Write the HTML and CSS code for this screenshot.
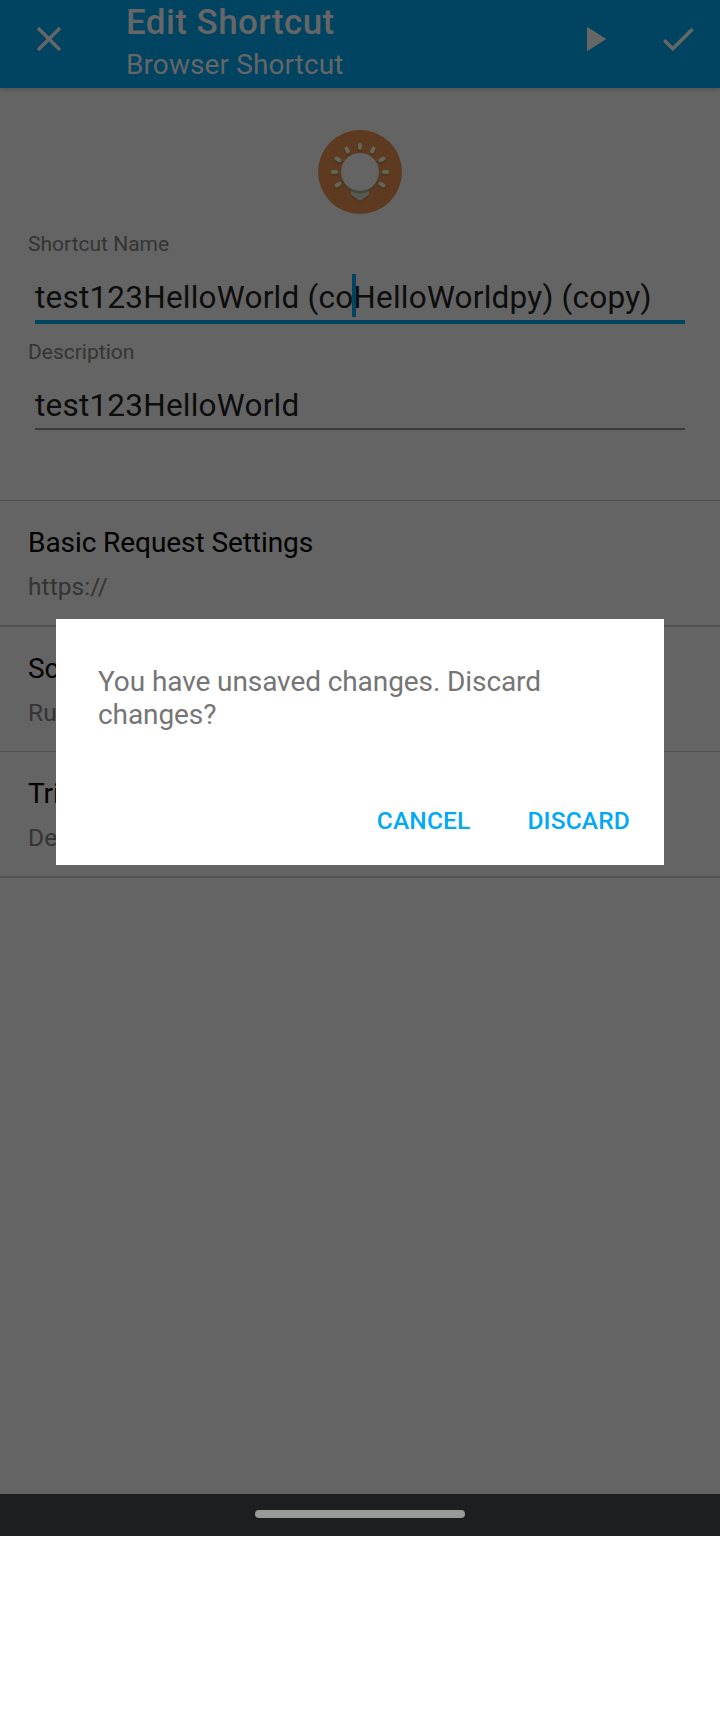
FILE: index.html
```html
<!DOCTYPE html>
<html lang="en">
<head>
<meta charset="utf-8">
<title>Edit Shortcut</title>
<link rel="stylesheet" href="styles.css">
</head>
<body>
<div class="screen">
  <header class="toolbar">
    <svg class="icon close" viewBox="0 0 24 24"><path d="M19 6.41L17.59 5 12 10.59 6.41 5 5 6.41 10.59 12 5 17.59 6.41 19 12 13.41 17.59 19 19 17.59 13.41 12z"/></svg>
    <div class="heading">
      <h1 class="title">Edit Shortcut</h1>
      <div class="subtitle">Browser Shortcut</div>
    </div>
    <svg class="icon play" viewBox="0 0 24 24"><path d="M8 5v14l11-7z"/></svg>
    <svg class="icon check" viewBox="0 0 24 24"><path d="M9 16.17L4.83 12l-1.42 1.41L9 19 21 7l-1.41-1.41z"/></svg>
  </header>
  <main class="form">
    <svg class="bulb" viewBox="-42 -42 84 84">
      <circle r="42" fill="#5d3a20"/>
      <g stroke="#49301d" stroke-width="4.2" stroke-linecap="round" transform="translate(0 1.5)">
        <path d="M0-27.300V-24M-13.500-23.500l1.500 3M13.500-23.500l-1.500 3M-23.500-13.500l3 1.700M23.500-13.500l-3 1.700M-27.300 0h3.300M27.300 0h-3.300M-23.500 13.500l3-1.700M23.500 13.500l-3-1.700"/>
      </g>
      <g stroke="#646658" stroke-width="4" stroke-linecap="round">
        <path d="M0-27.300V-24M-13.500-23.500l1.500 3M13.500-23.500l-1.500 3M-23.500-13.500l3 1.700M23.500-13.500l-3 1.700M-27.300 0h3.300M27.300 0h-3.300M-23.500 13.500l3-1.700M23.500 13.500l-3-1.700"/>
      </g>
      <path d="M-9 15H9v9L0 30l-9-6z" fill="#49301d"/>
      <path d="M-9 15H9v8L0 29l-9-6z" fill="#575a50"/>
      <circle r="19" cy="2.800" fill="#3c3c30" opacity=".6"/>
      <circle r="19" fill="#646464"/>
    </svg>
    <label class="label">Shortcut Name</label>
    <div class="input focused"><span class="value">test123HelloWorld (co<i class="caret"></i>HelloWorldpy) (copy)</span></div>
    <label class="label">Description</label>
    <div class="input"><span class="value">test123HelloWorld</span></div>
  </main>
  <section class="rows">
    <div class="row"><div class="row-title">Basic Request Settings</div><div class="row-text">https://</div></div>
    <div class="row thick"><div class="row-title">Scr</div><div class="row-text">Run</div></div>
    <div class="row"><div class="row-title">Trig</div><div class="row-text">Del</div></div>
  </section>
  <footer class="navbar"><div class="pill"></div></footer>
  <div class="dialog" role="dialog">
    <p class="message">You have unsaved changes. Discard changes?</p>
    <div class="actions"><button class="action">CANCEL</button><button class="action">DISCARD</button></div>
  </div>
</div>
</body>
</html>
```
FILE: styles.css
```css
* { box-sizing: border-box; }
body { margin: 0; background: #fff; font-family: Roboto, sans-serif; }
.screen { position: relative; width: 720px; height: 1536px; background: #646464; display: flex; flex-direction: column; overflow: hidden; }
.toolbar { height: 88px; flex: none; background: #014462; color: #666; display: flex; align-items: flex-start; box-shadow: 0 1px 5px rgba(0,0,0,.22); }
.icon { width: 42px; height: 42px; fill: #666; flex: none; margin-top: 18px; }
.close { margin-left: 28px; }
.heading { flex: 1; margin-left: 56px; padding-top: 3px; }
.title { margin: 0 0 4px; font-size: 35px; line-height: 40px; font-weight: 500; letter-spacing: .42px; }
.subtitle { font-size: 28px; line-height: 36px; letter-spacing: .1px; }
.play { margin-right: 42px; }
.check { margin-right: 21px; }
.form { height: 412px; flex: none; padding: 42px 28px 0; display: flex; flex-direction: column; }
.bulb { width: 84px; height: 84px; align-self: center; margin-bottom: 18px; }
.label { font-size: 21px; line-height: 24px; color: #343434; letter-spacing: 0; }
.input { margin: 19px 7px 0; height: 65px; font-size: 31.5px; line-height: 44px; color: #0d0d0d; letter-spacing: .22px; white-space: nowrap; }
.value { display: block; height: 47px; padding-top: 1px; border-bottom: 2px solid #3a3a3a; }
.focused .value { height: 49px; padding-top: 1px; border-bottom: 4px solid #014462; }
.caret { display: inline-block; width: 4px; height: 43px; margin: -4px -2.500px -4px -1.500px; vertical-align: -5px; background: #014462; position: relative; }
.rows { border-bottom: 2px solid #525252; height: 378px; flex: none; }
.row { height: 125px; border-top: 1px solid #525252; padding: 26px 28px 0; }
.row.thick { height: 126px; border-top-width: 2px; }
.row-title { font-size: 28px; line-height: 32px; color: #000; margin-bottom: 14px; letter-spacing: -.07px; }
.row-text { font-size: 24.5px; line-height: 28px; color: #343434; letter-spacing: .08px; }
.navbar { margin-top: auto; height: 42px; background: #1b1f20; display: flex; justify-content: center; align-items: center; padding-bottom: 2px; }
.pill { width: 210px; height: 8px; border-radius: 4px; background: #999b99; }
.dialog { position: absolute; left: 56px; top: 619px; width: 608px; height: 246px; background: #fff; padding: 46px 34px 30px 42px; display: flex; flex-direction: column; justify-content: space-between; }
.message { margin: 0; font-size: 28px; line-height: 33px; color: #757575; letter-spacing: -.09px; }
.actions { display: flex; justify-content: flex-end; gap: 57px; }
.action { border: 0; padding: 0; background: none; font: 500 24.5px/28px Roboto, sans-serif; letter-spacing: .16px; color: #03a9f4; }
```
